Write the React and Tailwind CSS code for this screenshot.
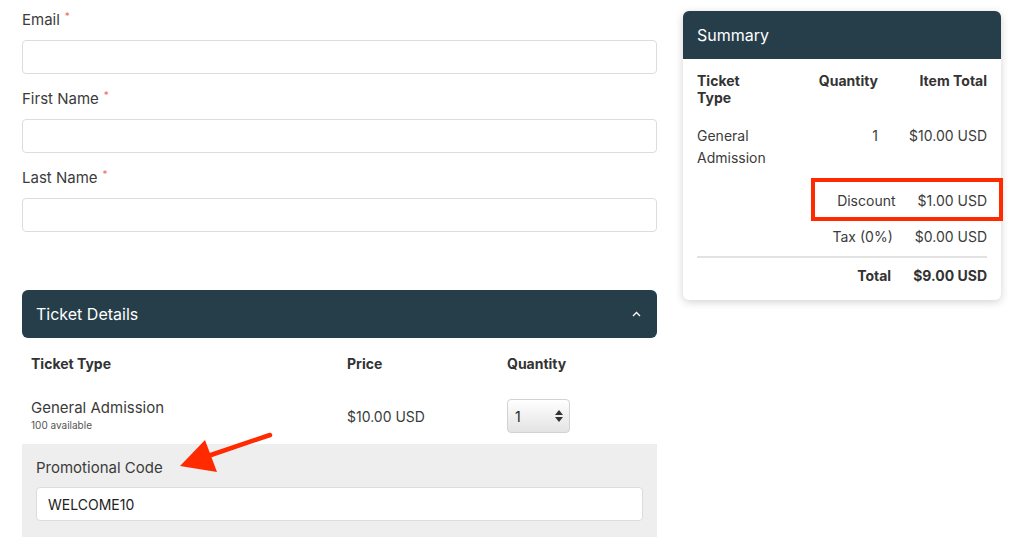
import React from "react";

const font = { fontFamily: "Inter, 'Noto Sans', sans-serif" };

const Field = ({ label, first }) => (
  <div className={first ? "" : "mt-[15px]"}>
    <div className="text-[15px] leading-[20px] text-[#3b3b3b]">
      {label}
      <span className="text-[#f26b5b] text-[10px] align-top ml-[5px] relative -top-[4px]">*</span>
    </div>
    <div className="mt-[10px] h-[34px] rounded-[4px] border border-[#d9dde2] bg-white" />
  </div>
);

const QtySelect = () => (
  <div className="w-[63px] h-[34px] rounded-[4px] border border-[#d0d3d6] bg-gradient-to-b from-white to-[#e3e3e3] flex items-center justify-between pl-[7px] pr-[6px] text-[14px] text-[#222]">
    <span>1</span>
    <svg width="8" height="12" viewBox="0 0 8 12">
      <polygon points="4,0 8,5 0,5" fill="#333" />
      <polygon points="0,7 8,7 4,12" fill="#333" />
    </svg>
  </div>
);

const App = () => {
  return (
    <div className="relative w-[1024px] h-[553px] bg-white overflow-hidden" style={font}>
      <div className="flex px-[22px] pt-[10px]">
        {/* Left column */}
        <div className="w-[635px]">
          <Field label="Email" first />
          <Field label="First Name" />
          <Field label="Last Name" />

          {/* Ticket Details */}
          <div className="mt-[58px] h-[48px] rounded-[6px] bg-[#263e4a] flex items-center justify-between pl-[14px] pr-[16px]">
            <span className="text-white text-[16px]">Ticket Details</span>
            <svg width="9" height="6" viewBox="0 0 9 6">
              <polyline points="1,5 4.5,1.5 8,5" fill="none" stroke="#fff" strokeWidth="1.3" />
            </svg>
          </div>

          <div className="grid grid-cols-[316px_160px_1fr] px-[9px] text-[#333]">
            <div className="h-[50px] flex items-center font-bold text-[14px]">Ticket Type</div>
            <div className="h-[50px] flex items-center font-bold text-[14px]">Price</div>
            <div className="h-[50px] flex items-center font-bold text-[14px]">Quantity</div>

            <div className="h-[56px] flex flex-col justify-center pb-[2px]">
              <span className="text-[15px] leading-[18px] text-[#3b3b3b]">General Admission</span>
              <span className="mt-[2px] text-[10px] leading-[13px] text-[#555]">100 available</span>
            </div>
            <div className="h-[56px] flex items-center text-[14px] text-[#3b3b3b]">$10.00 USD</div>
            <div className="h-[56px] flex items-center">
              <QtySelect />
            </div>
          </div>

          <div className="bg-[#eeeeee] px-[14px] pt-[14px] pb-[16px]">
            <div className="text-[15px] leading-[20px] text-[#3b3b3b]">Promotional Code</div>
            <div className="mt-[9px] h-[34px] rounded-[4px] border border-[#d9dde2] bg-white flex items-center px-[11px] text-[14px] text-[#222]">
              WELCOME10
            </div>
          </div>
        </div>

        {/* Summary */}
        <div className="relative ml-[26px] mt-[1px] w-[318px] self-start rounded-[6px] bg-white shadow-[0_2px_8px_rgba(0,0,0,0.18)]">
          <div className="h-[48px] rounded-t-[6px] bg-[#263e4a] flex items-center px-[14px]">
            <span className="text-white text-[16px]">Summary</span>
          </div>
          <div className="px-[14px] pt-[13px] pb-[14px] text-[#3b3b3b]">
            <div className="grid grid-cols-[80px_1fr_auto] gap-x-[31px]">
              <div className="font-bold text-[14px] leading-[17px] text-[#333]">Ticket Type</div>
              <div className="font-bold text-[14px] leading-[17px] text-right text-[#333]">Quantity</div>
              <div className="font-bold text-[14px] leading-[17px] text-right text-[#333]">Item Total</div>

              <div className="mt-[19px] text-[14px] leading-[22px]">General Admission</div>
              <div className="mt-[19px] text-[14px] leading-[22px] text-right">1</div>
              <div className="mt-[19px] text-[14px] leading-[22px] text-right whitespace-nowrap">$10.00 USD</div>
            </div>

            <div className="mt-[22px] flex justify-end gap-[22px] text-[14px] leading-[20px]">
              <span>Discount</span>
              <span>$1.00 USD</span>
            </div>
            <div className="mt-[16px] flex justify-end gap-[22px] text-[14px] leading-[20px]">
              <span>Tax (0%)</span>
              <span>$0.00 USD</span>
            </div>
            <div className="mt-[9px] h-[2px] bg-[#e2e2e2]" />
            <div className="mt-[8px] flex justify-end gap-[22px] text-[14px] leading-[20px] font-bold text-[#333]">
              <span>Total</span>
              <span>$9.00 USD</span>
            </div>
          </div>

          {/* highlight box */}
          <div className="absolute left-[128px] top-[167px] w-[192px] h-[43px] border-[4px] border-[#ff2a00] pointer-events-none" />
        </div>
      </div>

      {/* annotation arrow */}
      <svg className="absolute left-0 top-0 pointer-events-none" width="1024" height="553" viewBox="0 0 1024 553">
        <line x1="270" y1="435" x2="205" y2="457" stroke="#ff2a00" strokeWidth="4.5" strokeLinecap="round" />
        <polygon points="180,466 205,440 217,472" fill="#ff2a00" />
      </svg>
    </div>
  );
};

export default App;
